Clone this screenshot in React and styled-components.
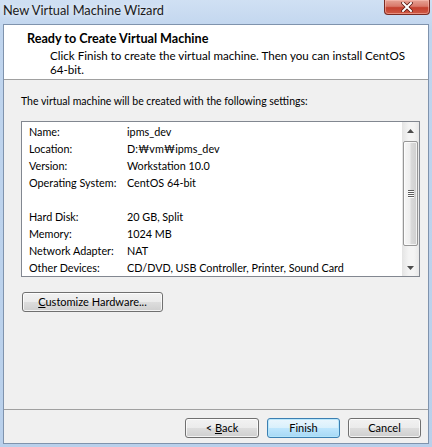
import React from "react";
import styled, { createGlobalStyle } from "styled-components";

const GlobalStyle = createGlobalStyle`
  html, body {
    margin: 0;
    padding: 0;
    background: #ffffff;
  }
  body {
    font-family: Lato, "Noto Sans CJK KR", sans-serif;
  }
`;

const FONT = `Lato, "Noto Sans CJK KR", sans-serif`;

const settings = [
  { label: "Name:", value: "ipms_dev" },
  { label: "Location:", value: "D:\u20A9vm\u20A9ipms_dev" },
  { label: "Version:", value: "Workstation 10.0" },
  { label: "Operating System:", value: "CentOS 64-bit" },
  { label: "", value: "" },
  { label: "Hard Disk:", value: "20 GB, Split" },
  { label: "Memory:", value: "1024 MB" },
  { label: "Network Adapter:", value: "NAT" },
  { label: "Other Devices:", value: "CD/DVD, USB Controller, Printer, Sound Card" },
];

const Window = styled.div`
  width: 432px;
  height: 447px;
  box-sizing: border-box;
  padding: 0 3px 3px;
  display: flex;
  flex-direction: column;
  background: linear-gradient(180deg, #d0e0f3 0px, #c0d5ee 30px, #b9d0eb 100%);
  font-family: ${FONT};
`;

const TitleBar = styled.div`
  height: 24px;
  display: flex;
  justify-content: space-between;
  align-items: flex-start;
  flex-shrink: 0;
`;

const TitleText = styled.div`
  padding-top: 2px;
  font-size: 12.8px;
  line-height: 16px;
  color: #1a1a1a;
  text-shadow: 0 0 6px rgba(255, 255, 255, 0.9);
`;

const CloseButton = styled.div`
  width: 46px;
  height: 15px;
  box-sizing: border-box;
  margin-right: -1px;
  border: 1px solid #7a2b22;
  border-top: none;
  border-radius: 0 0 4px 4px;
  background: linear-gradient(180deg, #e6a395 0%, #d9796a 45%, #c4402e 55%, #cf5a45 100%);
  box-shadow: inset 0 0 0 1px rgba(255, 200, 190, 0.5);
  display: flex;
  align-items: center;
  justify-content: center;
`;

const Client = styled.div`
  flex: 1;
  display: flex;
  flex-direction: column;
  border: 1px solid #7f93ad;
  background: #f0f0f0;
`;

const Header = styled.div`
  height: 55px;
  box-sizing: border-box;
  background: #ffffff;
  border-bottom: 1px solid #a0a0a0;
  padding: 7px 10px 0 23px;
  flex-shrink: 0;
`;

const HeaderTitle = styled.div`
  font-size: 12.6px;
  font-weight: 700;
  line-height: 14px;
  color: #000;
`;

const HeaderText = styled.div`
  margin: 3px 0 0 23px;
  font-size: 11.6px;
  line-height: 14px;
  color: #000;
`;

const Body = styled.div`
  flex: 1;
  padding: 14px 0 0 17px;
  display: flex;
  flex-direction: column;
  align-items: flex-start;
`;

const Intro = styled.div`
  font-size: 10.5px;
  line-height: 14px;
  color: #000;
`;

const ListBox = styled.div`
  margin-top: 13px;
  width: 399px;
  height: 156px;
  box-sizing: border-box;
  border: 1px solid #828790;
  background: #fff;
  display: flex;
`;

const Rows = styled.div`
  flex: 1;
  padding: 1px 0 0 7px;
`;

const Row = styled.div`
  display: grid;
  grid-template-columns: 98px 1fr;
  height: 17px;
  align-items: center;
  font-size: 10.8px;
  color: #000;
  white-space: nowrap;
`;

const ScrollBar = styled.div`
  width: 17px;
  display: flex;
  flex-direction: column;
  background: linear-gradient(90deg, #e4e4e4 0%, #f4f4f4 40%, #f4f4f4 70%, #e8e8e8 100%);
`;

const Arrow = styled.div`
  height: 17px;
  display: flex;
  align-items: center;
  justify-content: center;
  flex-shrink: 0;
`;

const Track = styled.div`
  flex: 1;
  padding: 2px 1px;
  display: flex;
  flex-direction: column;
`;

const Thumb = styled.div`
  height: 105px;
  box-sizing: border-box;
  border: 1px solid #979797;
  border-radius: 2px;
  background: linear-gradient(90deg, #f6f6f6 0%, #eeeeee 45%, #dadada 55%, #cfcfcf 100%);
  box-shadow: inset 0 0 0 1px rgba(255, 255, 255, 0.7);
  display: flex;
  align-items: center;
  justify-content: center;
`;

const Grip = styled.div`
  width: 6px;
  display: flex;
  flex-direction: column;
  gap: 1px;

  span {
    display: block;
    height: 1px;
    background: #5c5c5c;
    box-shadow: 0 1px 0 #ffffff;
  }
`;

const Button = styled.button`
  width: ${(p) => p.$w || 73}px;
  height: 20px;
  padding: 0;
  box-sizing: border-box;
  border: 1px solid ${(p) => (p.$default ? "#3c7fb1" : "#707070")};
  border-radius: 3px;
  background: ${(p) =>
    p.$default
      ? "linear-gradient(180deg, #eaf6fd 0%, #d9f0fc 50%, #bee6fd 51%, #a7d9f5 100%)"
      : "linear-gradient(180deg, #f2f2f2 0%, #ebebeb 50%, #dddddd 51%, #cfcfcf 100%)"};
  box-shadow: inset 0 0 0 1px
    ${(p) => (p.$default ? "rgba(180, 230, 252, 0.9)" : "rgba(255, 255, 255, 0.75)")};
  font-family: ${FONT};
  font-size: 11px;
  line-height: 18px;
  color: #000;

  u {
    text-decoration: underline;
    text-underline-offset: 1px;
  }
`;

const CustomizeRow = styled.div`
  display: flex;
  margin: 15px 0 0 1px;
`;

const Footer = styled.div`
  height: 34px;
  flex-shrink: 0;
  border-top: 1px solid #a0a0a0;
  box-sizing: border-box;
  padding: 8px 7px 0 0;
  display: flex;
  align-items: flex-start;
  justify-content: flex-end;
  gap: 8px;
`;

const TriangleUp = () => (
  <svg width="7" height="4" viewBox="0 0 7 4">
    <path d="M3.5 0 L7 4 L0 4 Z" fill="#4d4d4d" />
  </svg>
);

const TriangleDown = () => (
  <svg width="7" height="4" viewBox="0 0 7 4">
    <path d="M0 0 L7 0 L3.5 4 Z" fill="#4d4d4d" />
  </svg>
);

const CloseGlyph = () => (
  <svg width="12" height="10" viewBox="0 0 12 10">
    <path
      d="M2 1 L10 9 M10 1 L2 9"
      stroke="#5a1a12"
      strokeWidth="3.6"
      strokeLinecap="square"
    />
    <path d="M2 1 L10 9 M10 1 L2 9" stroke="#ffffff" strokeWidth="2" strokeLinecap="square" />
  </svg>
);

export default function App() {
  return (
    <>
      <GlobalStyle />
      <Window>
        <TitleBar>
          <TitleText>New Virtual Machine Wizard</TitleText>
          <CloseButton>
            <CloseGlyph />
          </CloseButton>
        </TitleBar>
        <Client>
          <Header>
            <HeaderTitle>Ready to Create Virtual Machine</HeaderTitle>
            <HeaderText>
              Click Finish to create the virtual machine. Then you can install CentOS
              <br />
              64-bit.
            </HeaderText>
          </Header>
          <Body>
            <Intro>The virtual machine will be created with the following settings:</Intro>
            <ListBox>
              <Rows>
                {settings.map((s, i) => (
                  <Row key={i}>
                    <span>{s.label}</span>
                    <span>{s.value}</span>
                  </Row>
                ))}
              </Rows>
              <ScrollBar>
                <Arrow>
                  <TriangleUp />
                </Arrow>
                <Track>
                  <Thumb>
                    <Grip>
                      <span />
                      <span />
                      <span />
                      <span />
                    </Grip>
                  </Thumb>
                </Track>
                <Arrow>
                  <TriangleDown />
                </Arrow>
              </ScrollBar>
            </ListBox>
            <CustomizeRow>
              <Button $w={141}>
                <u>C</u>ustomize Hardware...
              </Button>
            </CustomizeRow>
          </Body>
          <Footer>
            <Button $w={74}>
              &lt; <u>B</u>ack
            </Button>
            <Button $default>Finish</Button>
            <Button>Cancel</Button>
          </Footer>
        </Client>
      </Window>
    </>
  );
}
